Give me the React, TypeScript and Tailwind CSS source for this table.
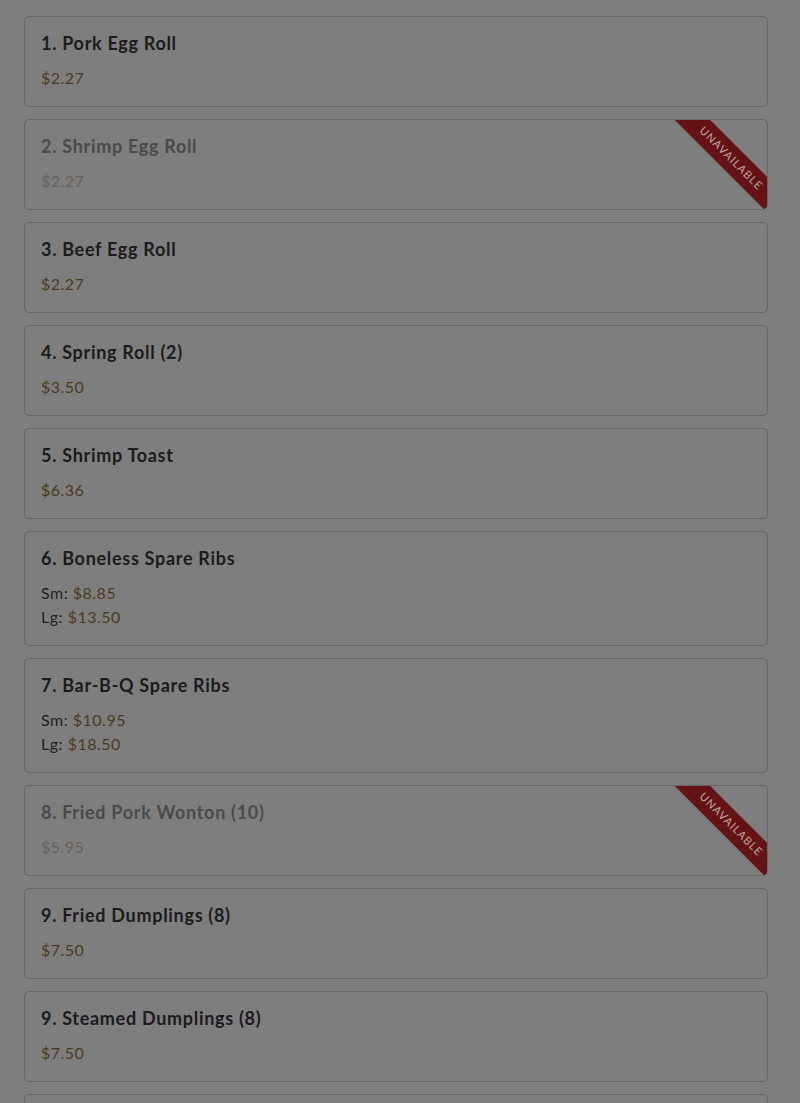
import React from "react";

type Price = { label?: string; value: string };

interface MenuItem {
	name: string;
	prices: Price[];
	unavailable?: boolean;
}

const items: MenuItem[] = [
	{ name: "1. Pork Egg Roll", prices: [{ value: "$2.27" }] },
	{ name: "2. Shrimp Egg Roll", prices: [{ value: "$2.27" }], unavailable: true },
	{ name: "3. Beef Egg Roll", prices: [{ value: "$2.27" }] },
	{ name: "4. Spring Roll (2)", prices: [{ value: "$3.50" }] },
	{ name: "5. Shrimp Toast", prices: [{ value: "$6.36" }] },
	{
		name: "6. Boneless Spare Ribs",
		prices: [
			{ label: "Sm:", value: "$8.85" },
			{ label: "Lg:", value: "$13.50" },
		],
	},
	{
		name: "7. Bar-B-Q Spare Ribs",
		prices: [
			{ label: "Sm:", value: "$10.95" },
			{ label: "Lg:", value: "$18.50" },
		],
	},
	{ name: "8. Fried Pork Wonton (10)", prices: [{ value: "$5.95" }], unavailable: true },
	{ name: "9. Fried Dumplings (8)", prices: [{ value: "$7.50" }] },
	{ name: "9. Steamed Dumplings (8)", prices: [{ value: "$7.50" }] },
	{ name: "10. Crab Rangoon (8)", prices: [{ value: "$6.95" }] },
];

function ItemCard({ item }: { item: MenuItem }) {
	const off = item.unavailable;

	return (
		<div className="relative overflow-hidden rounded-[5px] border border-[#676767] bg-[#7e7e7e] px-4 pt-[15px] pb-4">
			<h3
				className={`text-[18px] leading-[22px] font-bold tracking-[0.7px] ${off ? "text-[#4a4a4a]" : "text-[#1b1b1b]"}`}
			>
				{item.name}
			</h3>
			<div className="mt-3 tracking-[0.5px]">
				{item.prices.map((p) => (
					<div key={p.value + (p.label ?? "")} className="text-[16px] leading-[24px]">
						{p.label && <span className="text-[#1e1e1e]">{p.label} </span>}
						<span className={off ? "text-[#69625a]" : "text-[#4b3a1d]"}>{p.value}</span>
					</div>
				))}
			</div>

			{off && (
				<div className="absolute top-[26px] right-[-39px] flex h-[25px] w-[150px] rotate-45 items-center justify-center bg-[#651214] text-[11px] tracking-[1px] text-[#c0a6a6] uppercase">
					Unavailable
				</div>
			)}
		</div>
	);
}

export default function App() {
	return (
		<div
			className="min-h-screen bg-[#7e7e7e] pt-4 pr-8 pl-6"
			style={{ fontFamily: "Lato, 'Noto Sans', sans-serif" }}
		>
			<div className="flex flex-col gap-3">
				{items.map((item) => (
					<ItemCard key={item.name} item={item} />
				))}
			</div>
		</div>
	);
}
